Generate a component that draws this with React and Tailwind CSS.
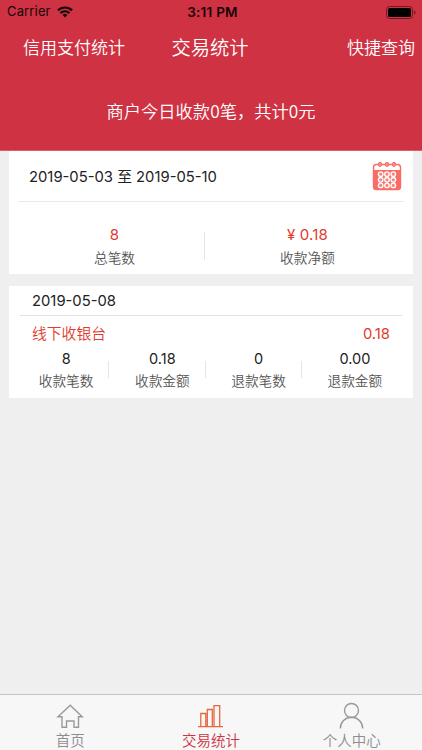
const TOTALS = [
    { value: "8", label: "总笔数" },
    { value: "¥ 0.18", label: "收款净额" },
];

const DAY_STATS = [
    { value: "8", label: "收款笔数" },
    { value: "0.18", label: "收款金额" },
    { value: "0", label: "退款笔数" },
    { value: "0.00", label: "退款金额" },
];

function WifiIcon() {
    return (
        <svg width="16" height="12" viewBox="0 0 16 12" className="ml-[6px]">
            <g fill="none" stroke="#160508" strokeWidth="2.2">
                <path d="M0.9 4.4a10.2 10.2 0 0 1 14.2 0" />
                <path d="M3.5 7.1a6.4 6.4 0 0 1 9 0" />
            </g>
            <path d="M8 11.4 5.6 9a3.4 3.4 0 0 1 4.8 0z" fill="#160508" />
        </svg>
    );
}

function BatteryIcon() {
    return (
        <svg width="30" height="13" viewBox="0 0 30 13">
            <rect x="0.5" y="0.5" width="26" height="12" rx="3" fill="none" stroke="#6d1a25" />
            <rect x="2" y="2" width="23" height="9" rx="1.6" fill="#000" />
            <path d="M28 4.4v4.2c1-.4 1.5-1.1 1.5-2.1S29 4.8 28 4.4z" fill="#6d1a25" />
        </svg>
    );
}

function CalendarIcon() {
    return (
        <svg width="30" height="30" viewBox="0 0 30 30">
            <rect x="1.5" y="3.5" width="27" height="25" rx="3" fill="#fff" stroke="#f96b65" strokeWidth="1.4" />
            <path d="M1 9h28v16.5a3.5 3.5 0 0 1-3.5 3.5h-21A3.5 3.5 0 0 1 1 25.5z" fill="#f96b65" />
            {[8, 15, 22].map((x) => (
                <ellipse key={x} cx={x} cy="3.4" rx="1.7" ry="2.1" fill="#f9928d" stroke="#f96b65" />
            ))}
            {[13.2, 18.8, 24.4].map((y) =>
                [8.7, 15, 21.3].map((x) => (
                    <circle key={`${x}-${y}`} cx={x} cy={y} r="2.3" fill="#f98680" stroke="#fff" strokeWidth="1.3" />
                ))
            )}
        </svg>
    );
}

function HomeIcon() {
    return (
        <svg width="28" height="26" viewBox="0 0 28 26" className="shrink-0" fill="none" stroke="#999" strokeWidth="1.4">
            <path d="M6 12.8H2L14.200 1.300l12 11.500h-3.700v10.400H18v-6.200h-7.500v6.200H6z" />
        </svg>
    );
}

function ChartIcon() {
    return (
        <svg width="28" height="26" viewBox="0 0 28 26" className="shrink-0" fill="none" stroke="#e4683f" strokeWidth="1.3">
            <path d="M1 22.700h25M3.800 22.700V9.500h5v13.200M10.300 22.700V5.500h5v17.200M17 22.700V1.700h5.700v21" />
        </svg>
    );
}

function UserIcon() {
    return (
        <svg width="28" height="28" viewBox="0 0 28 28" className="shrink-0" fill="none" stroke="#999" strokeWidth="1.4">
            <circle cx="13.5" cy="8.5" r="7" />
            <path d="M2.300 26.500a11.200 11.200 0 0 1 22.400 0" />
        </svg>
    );
}

function App() {
    return (
        <div className="flex h-[750px] w-[422px] flex-col overflow-hidden whitespace-nowrap bg-[#efefef] font-['Inter','Noto_Sans_CJK_SC',sans-serif]">
            <header className="h-[151px] shrink-0 border-b border-[#dc5d6b] bg-[#cf3243] text-white">
                <div className="grid h-6 grid-cols-3 items-center pl-[7px] pr-[6px] text-[13px] text-[#160508]">
                    <div className="flex items-center">
                        <span className="tracking-[0.15px]">Carrier</span>
                        <WifiIcon />
                    </div>
                    <span className="pl-[2px] text-center text-[13.5px] font-semibold tracking-[0.25px]">3:11 PM</span>
                    <div className="flex justify-end">
                        <BatteryIcon />
                    </div>
                </div>
                <nav className="flex h-[49px] items-center justify-between pl-[23px] pr-[7px] text-[17px] font-[350]">
                    <span>信用支付统计</span>
                    <span className="ml-[12px] text-[19.3px]">交易统计</span>
                    <span className="ml-[64px]">快捷查询</span>
                </nav>
                <p className="mt-[26px] text-center font-['Noto_Sans_CJK_SC',sans-serif] text-[17.3px] font-[350] leading-6">
                    商户今日收款0笔，共计0元
                </p>
            </header>

            <main className="grow px-[9px]">
                <section className="h-[123px] bg-white px-[9px]">
                    <div className="flex h-[51px] items-center justify-between border-b border-[#e9e9e9] pl-[11px] pr-[2px] text-[14.8px] text-[#222]">
                        <span className="pt-[2px]">2019-05-03 至 2019-05-10</span>
                        <CalendarIcon />
                    </div>
                    <div className="flex pt-[21px]">
                        {TOTALS.map((item, i) => (
                            <div key={item.label} className="relative flex flex-1 flex-col items-center">
                                <span className="text-[15px] leading-[23px] tracking-[0.2px] text-[#e23b2e]">{item.value}</span>
                                <span className="text-[13.7px] font-[350] leading-[24px] text-[#555]">{item.label}</span>
                                {i > 0 && <i className="absolute left-[-7px] top-[9px] h-[28px] w-px bg-[#e5e5e5]" />}
                            </div>
                        ))}
                    </div>
                </section>

                <section className="mt-[12px] h-[112px] bg-white">
                    <div className="mx-[11px] h-[30px] border-b border-[#e2e2e2] pl-[12px] text-[14.8px] leading-[30px] text-[#222]">
                        2019-05-08
                    </div>
                    <div className="flex h-[33px] items-center justify-between pl-[23px] pr-[23px] pt-[4px] text-[14.8px] text-[#e23b2e]">
                        <span className="font-[350]">线下收银台</span>
                        <span>0.18</span>
                    </div>
                    <div className="flex pl-[9px] pr-[10px]">
                        {DAY_STATS.map((item, i) => (
                            <div key={item.label} className="relative flex flex-1 flex-col items-center">
                                <span className="text-[14.5px] leading-[20px] text-[#222]">{item.value}</span>
                                <span className="text-[13.7px] font-[350] leading-[24px] text-[#555]">{item.label}</span>
                                {i > 0 && <i className="absolute left-[-6px] top-[12px] h-[17px] w-px bg-[#e5e5e5]" />}
                            </div>
                        ))}
                    </div>
                </section>
            </main>

            <footer className="flex h-[56px] shrink-0 border-t border-[#c4c4c4] bg-[#f7f7f7] text-[14.5px] font-[350] text-[#8d8d8d]">
                <a className="flex flex-1 flex-col items-center pt-[9px]">
                    <HomeIcon />
                    <span className="leading-[22px]">首页</span>
                </a>
                <a className="flex flex-1 flex-col items-center pt-[9px] text-[#cf3243]">
                    <ChartIcon />
                    <span className="leading-[22px]">交易统计</span>
                </a>
                <a className="flex flex-1 flex-col items-center pt-[7px]">
                    <UserIcon />
                    <span className="leading-[22px]">个人中心</span>
                </a>
            </footer>
        </div>
    );
}

export default App;
